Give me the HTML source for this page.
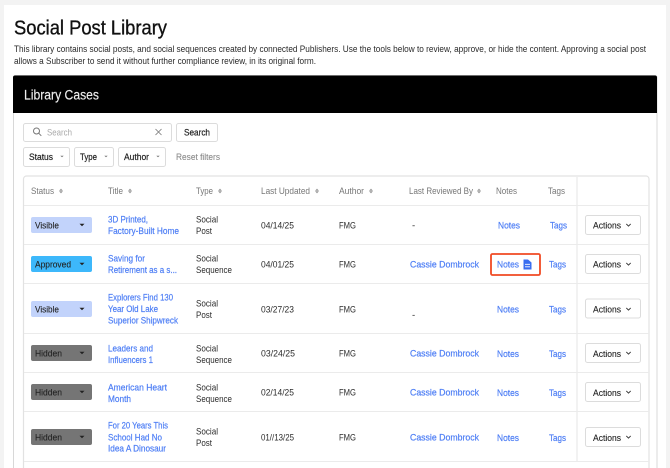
<!DOCTYPE html>
<html lang="en">
<head>
<meta charset="utf-8">
<title>Social Post Library</title>
<style>
html,body{margin:0;padding:0;background:#f3f3f3;width:670px;height:468px;overflow:hidden}
svg{display:block;filter:blur(.35px)}
text{font-family:"Liberation Sans",sans-serif;font-size:9.4px;fill:#333}
.b{fill:#4d7ef5;stroke:#4d7ef5;stroke-width:.2px}
.h{fill:#777;font-size:9.4px}
.d{fill:#2b2b2b;font-size:9.6px}
.s{fill:#222;font-size:9.6px;stroke:#222;stroke-width:.12px}
.f{fill:#222;font-size:9.6px;stroke:#222;stroke-width:.2px}
.p{font-size:9.6px;fill:#2a2a2a}
.btn{fill:#fff;stroke:#dcdcdc}
</style>
</head>
<body>
<svg width="670" height="468" viewBox="0 0 670 468" xmlns="http://www.w3.org/2000/svg">
<defs>
<g id="sort"><path d="M0 -1L2 1.2H-2Z M0 3.8L2 1.6H-2Z" transform="translate(0 -1.4)" fill="#999"/></g>
<path id="car" d="M-2.5 -1.3H2.5L0 1.3Z" fill="#222"/>
<path id="chev" d="M-2.2 -1.1L0 1.1L2.2 -1.1" fill="none" stroke="#333" stroke-width=".9"/>
<path id="gc" d="M-1.7 -.8H1.7L0 .8Z" fill="#777"/>
</defs>

<rect x="4" y="5" width="662" height="463" fill="#fff"/>

<text x="14" y="34.5" style="font-size:20.5px;fill:#111;stroke:#111;stroke-width:.35px" textLength="153" lengthAdjust="spacingAndGlyphs">Social Post Library</text>
<text class="p" x="14" y="52" textLength="632" lengthAdjust="spacingAndGlyphs">This library contains social posts, and social sequences created by connected Publishers. Use the tools below to review, approve, or hide the content. Approving a social post</text>
<text class="p" x="14" y="64" textLength="302" lengthAdjust="spacingAndGlyphs">allows a Subscriber to send it without further compliance review, in its original form.</text>

<rect x="13.5" y="75.5" width="643.5" height="400" rx="2" fill="#fff" stroke="#d8d8d8"/>
<path d="M13 113V77.5a2 2 0 0 1 2-2H655a2 2 0 0 1 2 2V113Z" fill="#000"/>
<text x="24" y="99.5" style="font-size:13.5px;fill:#eee;stroke:#eee;stroke-width:.15px" textLength="75" lengthAdjust="spacingAndGlyphs">Library Cases</text>

<rect class="btn" x="23.5" y="123.5" width="148" height="18" rx="2"/>
<circle cx="36.5" cy="131" r="3" fill="none" stroke="#777"/>
<path d="M38.7 133.2L41.3 135.8" stroke="#777" fill="none"/>
<text x="47" y="135.5" style="fill:#aaa;font-size:9.6px" textLength="25" lengthAdjust="spacingAndGlyphs">Search</text>
<path d="M155.5 129L161.5 135M161.5 129L155.5 135" stroke="#777" stroke-width=".8" fill="none"/>
<rect class="btn" x="176.5" y="123.5" width="41" height="18" rx="2"/>
<text class="f" x="184" y="135.5" textLength="26" lengthAdjust="spacingAndGlyphs">Search</text>

<rect class="btn" x="23.5" y="147.5" width="46" height="19" rx="2"/>
<text class="f" x="29" y="160" textLength="24" lengthAdjust="spacingAndGlyphs">Status</text>
<use href="#gc" x="62" y="156.5"/>
<rect class="btn" x="74.5" y="147.5" width="39" height="19" rx="2"/>
<text class="f" x="80" y="160" textLength="17" lengthAdjust="spacingAndGlyphs">Type</text>
<use href="#gc" x="106" y="156.5"/>
<rect class="btn" x="118.5" y="147.5" width="47" height="19" rx="2"/>
<text class="f" x="124" y="160" textLength="25" lengthAdjust="spacingAndGlyphs">Author</text>
<use href="#gc" x="158" y="156.5"/>
<text x="176" y="160" style="fill:#8a8a8a;font-size:9.4px;stroke:#8a8a8a;stroke-width:.1px" textLength="44" lengthAdjust="spacingAndGlyphs">Reset filters</text>

<!-- table -->
<path d="M23.5 468V179a3 3 0 0 1 3-3H646a3 3 0 0 1 3 3V468" fill="#fff" stroke="#e2e2e2" stroke-width="1.2"/>
<rect x="576" y="177" width="2" height="284" fill="#f2f2f2"/>
<g fill="#ebebeb">
<rect x="24" y="205" width="625" height="1"/>
<rect x="24" y="244" width="625" height="1"/>
<rect x="24" y="283" width="625" height="1"/>
<rect x="24" y="333" width="625" height="1"/>
<rect x="24" y="372" width="625" height="1"/>
<rect x="24" y="411" width="625" height="1"/>
<rect x="24" y="461" width="625" height="1"/>
</g>

<!-- header -->
<text class="h" x="31" y="194" textLength="23" lengthAdjust="spacingAndGlyphs">Status</text><use href="#sort" x="61" y="191"/>
<text class="h" x="108" y="194" textLength="15" lengthAdjust="spacingAndGlyphs">Title</text><use href="#sort" x="130" y="191"/>
<text class="h" x="196" y="194" textLength="17" lengthAdjust="spacingAndGlyphs">Type</text><use href="#sort" x="220" y="191"/>
<text class="h" x="261" y="194" textLength="49" lengthAdjust="spacingAndGlyphs">Last Updated</text><use href="#sort" x="317" y="191"/>
<text class="h" x="339" y="194" textLength="25" lengthAdjust="spacingAndGlyphs">Author</text><use href="#sort" x="371" y="191"/>
<text class="h" x="409" y="194" textLength="64" lengthAdjust="spacingAndGlyphs">Last Reviewed By</text><use href="#sort" x="479" y="191"/>
<text class="h" x="496" y="194" textLength="21" lengthAdjust="spacingAndGlyphs">Notes</text>
<text class="h" x="548" y="194" textLength="17" lengthAdjust="spacingAndGlyphs">Tags</text>

<!-- row 1 -->
<rect x="31" y="217" width="61" height="16" rx="2" fill="#c2d3fb"/>
<text class="s" x="35" y="228.5" textLength="24" lengthAdjust="spacingAndGlyphs">Visible</text><use href="#car" x="82" y="225"/>
<text class="b" x="108" y="222.5" textLength="40" lengthAdjust="spacingAndGlyphs">3D Printed,</text>
<text class="b" x="108" y="234" textLength="71" lengthAdjust="spacingAndGlyphs">Factory-Built Home</text>
<text class="d" x="196" y="222.5" textLength="22" lengthAdjust="spacingAndGlyphs">Social</text>
<text class="d" x="196" y="234" textLength="16" lengthAdjust="spacingAndGlyphs">Post</text>
<text class="d" x="261" y="228.5" textLength="33" lengthAdjust="spacingAndGlyphs">04/14/25</text>
<text class="d" x="339" y="228.5" textLength="17" lengthAdjust="spacingAndGlyphs">FMG</text>
<text class="d" x="412" y="228.5">-</text>
<text class="b" x="498" y="228.5" textLength="22" lengthAdjust="spacingAndGlyphs">Notes</text>
<text class="b" x="550" y="228.5" textLength="17" lengthAdjust="spacingAndGlyphs">Tags</text>
<rect class="btn" x="585.5" y="215.5" width="55" height="19" rx="2"/>
<text class="s" x="593" y="228.5" textLength="28" lengthAdjust="spacingAndGlyphs">Actions</text><use href="#chev" x="628.5" y="225"/>

<!-- row 2 -->
<rect x="31" y="256" width="61" height="16" rx="2" fill="#3db8fb"/>
<text class="s" x="35" y="267.5" textLength="36" lengthAdjust="spacingAndGlyphs">Approved</text><use href="#car" x="82" y="264"/>
<text class="b" x="108" y="261.5" textLength="37" lengthAdjust="spacingAndGlyphs">Saving for</text>
<text class="b" x="108" y="273" textLength="69" lengthAdjust="spacingAndGlyphs">Retirement as a s...</text>
<text class="d" x="196" y="261.5" textLength="22" lengthAdjust="spacingAndGlyphs">Social</text>
<text class="d" x="196" y="273" textLength="36" lengthAdjust="spacingAndGlyphs">Sequence</text>
<text class="d" x="261" y="267.5" textLength="33" lengthAdjust="spacingAndGlyphs">04/01/25</text>
<text class="d" x="339" y="267.5" textLength="17" lengthAdjust="spacingAndGlyphs">FMG</text>
<text class="b" x="410" y="267.5" textLength="69" lengthAdjust="spacingAndGlyphs">Cassie Dombrock</text>
<rect x="491" y="254" width="49" height="21" rx="1.5" fill="none" stroke="#f04a23" stroke-width="1.8"/>
<text class="b" x="497" y="267.5" textLength="22" lengthAdjust="spacingAndGlyphs">Notes</text>
<path d="M523.5 259.5H528L531.5 262.5V269.5H523.5Z" fill="#3a6ef0"/>
<path d="M525 264.3H530M525 266.8H530" stroke="#fff" stroke-width=".8" fill="none"/>
<text class="b" x="549" y="267.5" textLength="17" lengthAdjust="spacingAndGlyphs">Tags</text>
<rect class="btn" x="585.5" y="254.5" width="55" height="19" rx="2"/>
<text class="s" x="593" y="267.5" textLength="28" lengthAdjust="spacingAndGlyphs">Actions</text><use href="#chev" x="628.5" y="264"/>

<!-- row 3 -->
<rect x="31" y="301" width="61" height="16" rx="2" fill="#c2d3fb"/>
<text class="s" x="35" y="312.5" textLength="24" lengthAdjust="spacingAndGlyphs">Visible</text><use href="#car" x="82" y="309"/>
<text class="b" x="108" y="300.5" textLength="65" lengthAdjust="spacingAndGlyphs">Explorers Find 130</text>
<text class="b" x="108" y="312" textLength="50" lengthAdjust="spacingAndGlyphs">Year Old Lake</text>
<text class="b" x="108" y="323.5" textLength="70" lengthAdjust="spacingAndGlyphs">Superior Shipwreck</text>
<text class="d" x="196" y="306.5" textLength="22" lengthAdjust="spacingAndGlyphs">Social</text>
<text class="d" x="196" y="318" textLength="16" lengthAdjust="spacingAndGlyphs">Post</text>
<text class="d" x="261" y="312.5" textLength="33" lengthAdjust="spacingAndGlyphs">03/27/23</text>
<text class="d" x="339" y="312.5" textLength="17" lengthAdjust="spacingAndGlyphs">FMG</text>
<text class="d" x="412" y="318">-</text>
<text class="b" x="497" y="312.5" textLength="22" lengthAdjust="spacingAndGlyphs">Notes</text>
<text class="b" x="549" y="312.5" textLength="17" lengthAdjust="spacingAndGlyphs">Tags</text>
<rect class="btn" x="585.5" y="299" width="55" height="19" rx="2"/>
<text class="s" x="593" y="312.5" textLength="28" lengthAdjust="spacingAndGlyphs">Actions</text><use href="#chev" x="628.5" y="309"/>

<!-- row 4 -->
<rect x="31" y="345" width="61" height="16" rx="2" fill="#757575"/>
<text class="s" x="35" y="356.5" textLength="27" lengthAdjust="spacingAndGlyphs">Hidden</text><use href="#car" x="82" y="353"/>
<text class="b" x="108" y="351.5" textLength="45" lengthAdjust="spacingAndGlyphs">Leaders and</text>
<text class="b" x="108" y="363" textLength="45" lengthAdjust="spacingAndGlyphs">Influencers 1</text>
<text class="d" x="196" y="351.5" textLength="22" lengthAdjust="spacingAndGlyphs">Social</text>
<text class="d" x="196" y="363" textLength="36" lengthAdjust="spacingAndGlyphs">Sequence</text>
<text class="d" x="261" y="356.5" textLength="34" lengthAdjust="spacingAndGlyphs">03/24/25</text>
<text class="d" x="339" y="356.5" textLength="17" lengthAdjust="spacingAndGlyphs">FMG</text>
<text class="b" x="410" y="356.5" textLength="69" lengthAdjust="spacingAndGlyphs">Cassie Dombrock</text>
<text class="b" x="497" y="357" textLength="22" lengthAdjust="spacingAndGlyphs">Notes</text>
<text class="b" x="549" y="357" textLength="17" lengthAdjust="spacingAndGlyphs">Tags</text>
<rect class="btn" x="585.5" y="343.5" width="55" height="19" rx="2"/>
<text class="s" x="593" y="357" textLength="28" lengthAdjust="spacingAndGlyphs">Actions</text><use href="#chev" x="628.5" y="353"/>

<!-- row 5 -->
<rect x="31" y="384" width="61" height="16" rx="2" fill="#757575"/>
<text class="s" x="35" y="395.5" textLength="27" lengthAdjust="spacingAndGlyphs">Hidden</text><use href="#car" x="82" y="392"/>
<text class="b" x="108" y="390.5" textLength="59" lengthAdjust="spacingAndGlyphs">American Heart</text>
<text class="b" x="108" y="402" textLength="23" lengthAdjust="spacingAndGlyphs">Month</text>
<text class="d" x="196" y="390.5" textLength="22" lengthAdjust="spacingAndGlyphs">Social</text>
<text class="d" x="196" y="402" textLength="36" lengthAdjust="spacingAndGlyphs">Sequence</text>
<text class="d" x="261" y="395.5" textLength="33" lengthAdjust="spacingAndGlyphs">02/14/25</text>
<text class="d" x="339" y="395.5" textLength="17" lengthAdjust="spacingAndGlyphs">FMG</text>
<text class="b" x="410" y="395.5" textLength="69" lengthAdjust="spacingAndGlyphs">Cassie Dombrock</text>
<text class="b" x="497" y="396" textLength="22" lengthAdjust="spacingAndGlyphs">Notes</text>
<text class="b" x="549" y="396" textLength="17" lengthAdjust="spacingAndGlyphs">Tags</text>
<rect class="btn" x="585.5" y="382.5" width="55" height="19" rx="2"/>
<text class="s" x="593" y="396" textLength="28" lengthAdjust="spacingAndGlyphs">Actions</text><use href="#chev" x="628.5" y="392"/>

<!-- row 6 -->
<rect x="31" y="429" width="61" height="16" rx="2" fill="#757575"/>
<text class="s" x="35" y="440.5" textLength="27" lengthAdjust="spacingAndGlyphs">Hidden</text><use href="#car" x="82" y="437"/>
<text class="b" x="108" y="428.5" textLength="60" lengthAdjust="spacingAndGlyphs">For 20 Years This</text>
<text class="b" x="108" y="440.5" textLength="54" lengthAdjust="spacingAndGlyphs">School Had No</text>
<text class="b" x="108" y="451.5" textLength="58" lengthAdjust="spacingAndGlyphs">Idea A Dinosaur</text>
<text class="d" x="196" y="434.5" textLength="22" lengthAdjust="spacingAndGlyphs">Social</text>
<text class="d" x="196" y="446" textLength="16" lengthAdjust="spacingAndGlyphs">Post</text>
<text class="d" x="261" y="440.5" textLength="33" lengthAdjust="spacingAndGlyphs">01//13/25</text>
<text class="d" x="339" y="440.5" textLength="17" lengthAdjust="spacingAndGlyphs">FMG</text>
<text class="b" x="410" y="440.5" textLength="69" lengthAdjust="spacingAndGlyphs">Cassie Dombrock</text>
<text class="b" x="497" y="441" textLength="22" lengthAdjust="spacingAndGlyphs">Notes</text>
<text class="b" x="549" y="441" textLength="17" lengthAdjust="spacingAndGlyphs">Tags</text>
<rect class="btn" x="585.5" y="427.5" width="55" height="19" rx="2"/>
<text class="s" x="593" y="441" textLength="28" lengthAdjust="spacingAndGlyphs">Actions</text><use href="#chev" x="628.5" y="437"/>
</svg>
</body>
</html>
